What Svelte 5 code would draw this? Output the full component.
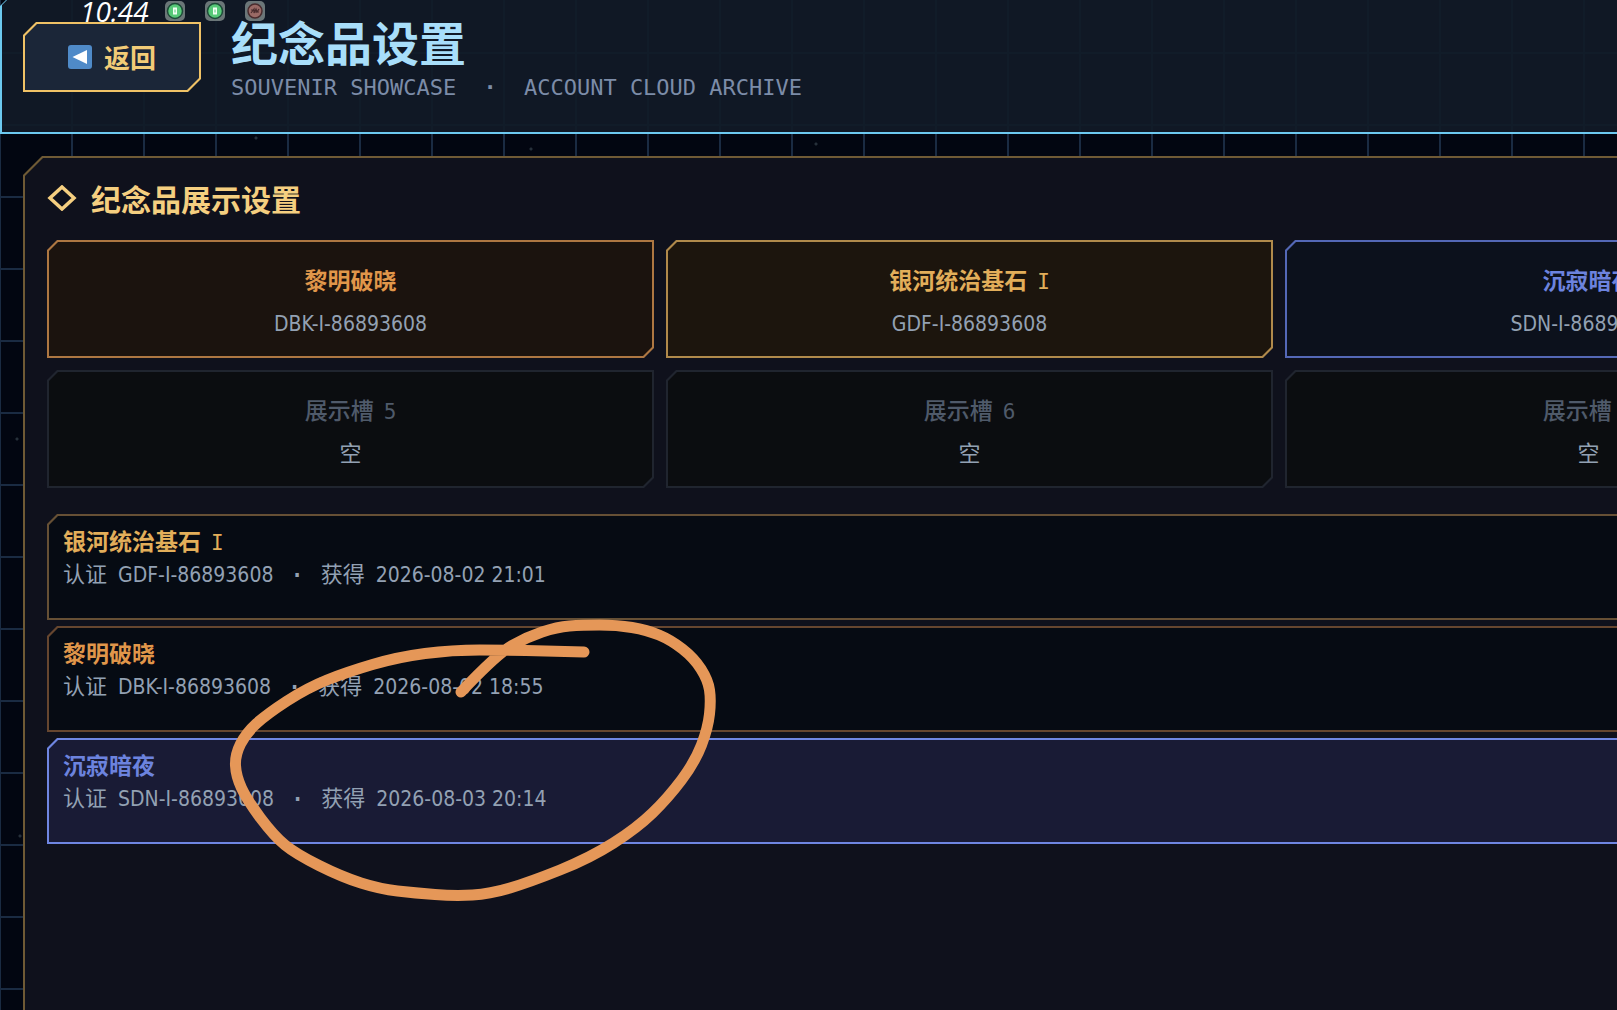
<script lang="ts">
  type Tone = 'dawn' | 'gold' | 'night' | 'empty';
  interface Slot { tone: Tone; name: string; rank?: string; code: string }
  interface Souvenir extends Slot { date: string }

  const slots: Slot[] = [
    { tone: 'dawn', name: '黎明破晓', code: 'DBK-I-86893608' },
    { tone: 'gold', name: '银河统治基石', rank: 'I', code: 'GDF-I-86893608' },
    { tone: 'night', name: '沉寂暗夜', code: 'SDN-I-86893608' },
    { tone: 'empty', name: '展示槽', rank: '5', code: '空' },
    { tone: 'empty', name: '展示槽', rank: '6', code: '空' },
    { tone: 'empty', name: '展示槽', rank: '7', code: '空' },
  ];

  const souvenirs: Souvenir[] = [
    { tone: 'gold', name: '银河统治基石', rank: 'I', code: 'GDF-I-86893608', date: '2026-08-02 21:01' },
    { tone: 'dawn', name: '黎明破晓', code: 'DBK-I-86893608', date: '2026-08-02 18:55' },
    { tone: 'night', name: '沉寂暗夜', code: 'SDN-I-86893608', date: '2026-08-03 20:14' },
  ];

  let selected = $state('SDN-I-86893608');

  // freehand stroke, smoothed through the midpoints
  const stroke = [
    [461, 692], [497, 654], [527, 637], [557, 627], [582, 625], [617, 625], [647, 630], [671, 640],
    [694, 658], [708, 680], [711, 700], [708, 728], [695, 762], [668, 798], [637, 828], [590, 858],
    [530, 882], [490, 894], [455, 896], [415, 893], [380, 889], [342, 877], [296, 854], [274, 836],
    [247, 800], [236, 776], [235, 755], [246, 733], [267, 714], [307, 688], [347, 672], [398, 657],
    [452, 650], [507, 650], [584, 652],
  ];

  function toPath(pts: number[][]) {
    let d = `M${pts[0]}`;
    for (let i = 1; i < pts.length - 1; i++) {
      const mx = (pts[i][0] + pts[i + 1][0]) / 2;
      const my = (pts[i][1] + pts[i + 1][1]) / 2;
      d += ` Q${pts[i]} ${mx},${my}`;
    }
    return `${d} L${pts[pts.length - 1]}`;
  }
</script>

{#snippet title(item: Slot)}
  <span class="name">{item.name}{#if item.rank}<span class="rank">{item.rank}</span>{/if}</span>
{/snippet}

<div class="page">
  <header class="cut topbar">
    <button class="cut back">
      <svg width="24" height="24" viewBox="0 0 24 24" aria-hidden="true">
        <rect width="24" height="24" rx="3" fill="#4f8ac8" />
        <path d="M4.500 12 19 5v14z" fill="#fff" />
      </svg>
      <span>返回</span>
    </button>
    <div class="heading">
      <h1>纪念品设置</h1>
      <p>SOUVENIR SHOWCASE <i>·</i> ACCOUNT CLOUD ARCHIVE</p>
    </div>
  </header>

  <div class="status">
    <span class="clock">10:44</span>
    {#each ['on', 'on', 'off'] as state}
      <svg width="20" height="20" viewBox="0 0 20 20" aria-hidden="true">
        <rect width="20" height="20" rx="5" fill="#6b7678" />
        {#if state === 'on'}
          <circle cx="10" cy="10" r="7.500" fill="#57c878" stroke="#1d4a38" stroke-width="1.500" />
          <rect x="8" y="6.500" width="4" height="7" fill="#f1fff4" />
          <path d="M10 8.500v3" stroke="#57c878" />
        {:else}
          <circle cx="10" cy="10" r="7" fill="#9a6a66" stroke="#4a2c2e" stroke-width="1.500" />
          <path d="M6 12l3-4v4l2-4 1 3 2-3M6 9h3M10 11h4" fill="none" stroke="#4a2c2e" stroke-width="1.200" />
        {/if}
      </svg>
    {/each}
  </div>

  <main class="cut panel">
    <h2>
      <svg width="30" height="26" viewBox="0 0 30 26" aria-hidden="true">
        <path d="M15 2 27 13 15 24 3 13z" fill="none" stroke="#f5cf80" stroke-width="3.500" />
      </svg>
      纪念品展示设置
    </h2>

    <section class="slots">
      {#each slots as slot}
        <button class="cut slot {slot.tone}">
          {@render title(slot)}
          <span class="detail"><span class:latin={slot.tone !== 'empty'}>{slot.code}</span></span>
        </button>
      {/each}
    </section>

    <section class="list">
      {#each souvenirs as item}
        <button
          class="cut row {item.tone}"
          class:selected={selected === item.code}
          onclick={() => (selected = item.code)}
        >
          {@render title(item)}
          <span class="detail">认证<span class="latin">{item.code}<i>·</i></span>获得<span class="latin">{item.date}</span></span>
        </button>
      {/each}
    </section>
  </main>

  <svg class="mark" aria-hidden="true">
    <path d={toPath(stroke)} />
  </svg>
</div>

<style>
  :global(body) {
    margin: 0;
    background: #020611;
  }

  .page {
    position: relative;
    display: flex;
    flex-direction: column;
    min-height: 100vh;
    overflow: hidden;
    font-family: "Noto Sans CJK SC", sans-serif;
    font-size: 22px;
    background:
      radial-gradient(circle at 256px 138px, #26303a 1px, transparent 2px),
      radial-gradient(circle at 531px 149px, #26303a 1px, transparent 2px),
      radial-gradient(circle at 816px 144px, #26303a 1px, transparent 2px),
      radial-gradient(circle at 17px 439px, #26303a 1px, transparent 2px),
      radial-gradient(circle at 20px 836px, #26303a 1px, transparent 2px),
      linear-gradient(90deg, #1a2b42 2px, transparent 2px) -1px 0 / 72px 72px,
      linear-gradient(#1a2b42 2px, transparent 2px) 0 52px / 72px 72px,
      #020611;
  }

  .latin {
    font-family: "DejaVu Sans Condensed", "DejaVu Sans", sans-serif;
    font-size: 21px;
    line-height: 21px;
  }
  .row .latin { margin-left: 11px; }
  .rank {
    margin-left: 10px;
    font-family: "DejaVu Sans Mono", monospace;
    font-size: 21px;
    font-weight: 400;
    line-height: 21px;
  }
  i {
    margin: 0 20px;
    font-style: normal;
    font-weight: 700;
  }

  /* framed box with cut corners: --a top left, --b bottom right */
  .cut {
    --a: 10px;
    --b: 0px;
    --line: #6f5a35;
    --fill: #0f111c;
    position: relative;
    z-index: 0;
    box-sizing: border-box;
    border: 0;
    background: var(--line);
    clip-path: polygon(var(--a) 0, 100% 0, 100% calc(100% - var(--b)), calc(100% - var(--b)) 100%, 0 100%, 0 var(--a));
  }
  .cut::before {
    content: "";
    position: absolute;
    z-index: -1;
    inset: 2px;
    background: var(--fill);
    clip-path: polygon(calc(var(--a) - 1px) 0, 100% 0, 100% calc(100% - var(--b) + 1px), calc(100% - var(--b) + 1px) 100%, 0 100%, 0 calc(var(--a) - 1px));
  }

  button {
    font: inherit;
    cursor: pointer;
  }

  .topbar {
    --a: 6px;
    --line: #6cc9f0;
    --fill:
      linear-gradient(90deg, #111c29 2px, transparent 2px) -3px 0 / 72px 72px,
      linear-gradient(#111c29 2px, transparent 2px) 0 52px / 72px 72px,
      #101825;
    display: flex;
    gap: 30px;
    height: 134px;
    padding: 22px 23px 0;
  }
  .topbar::before {
    top: 0;
    right: 0;
  }

  .back {
    --a: 13px;
    --b: 13px;
    --line: #f0c266;
    --fill: #1b2638;
    display: flex;
    align-items: center;
    justify-content: center;
    gap: 12px;
    width: 178px;
    height: 70px;
    padding: 0;
    color: #f2cb77;
    font-size: 26px;
    line-height: 26px;
    font-weight: 700;
  }

  h1, h2, p { margin: 0; }
  h1 {
    color: #a8defa;
    font-size: 47px;
    line-height: 38px;
  }
  .heading p {
    color: #7c8ca8;
    font-family: "DejaVu Sans Mono", monospace;
    line-height: 56px;
  }
  .heading i { margin: 0 14px; }

  .status {
    position: absolute;
    top: 0;
    left: 80px;
    display: flex;
    gap: 20px;
    z-index: 1;
  }
  .status svg { margin-top: 1px; }
  .clock {
    width: 65px;
    color: #fff;
    font: italic 400 28px/22px "Open Sans", sans-serif;
  }

  .panel {
    --a: 19px;
    flex: 1;
    min-width: 100%;
    width: max-content;
    margin: 22px 0 0 23px;
    padding: 24px;
  }
  .panel::before { bottom: 0; }

  h2 {
    display: flex;
    align-items: center;
    gap: 14px;
    margin-bottom: 24px;
    color: #f5cf80;
    font-size: 30px;
    line-height: 36px;
  }

  .slots {
    display: grid;
    grid-template-columns: repeat(3, minmax(607px, 1fr));
    gap: 12px;
    margin-bottom: 26px;
  }
  .slot {
    --b: 10px;
    display: flex;
    flex-direction: column;
    align-items: center;
    padding: 18px 0 16px;
    line-height: 42px;
  }
  .name {
    color: var(--ink);
    font-size: 23px;
    font-weight: 700;
  }
  .detail { color: #93a1b3; }

  .list {
    display: grid;
    gap: 6px;
  }
  .row {
    display: flex;
    flex-direction: column;
    padding: 10px 16px 32px;
    line-height: 32px;
    text-align: left;
  }

  .dawn { --ink: #e0964a; --line: #ad7742; --fill: #1b130e; }
  .gold { --ink: #e2ae5a; --line: #b08a4b; --fill: #1c150d; }
  .night { --ink: #6c83de; --line: #5468b6; --fill: #0c111c; }
  .empty { --ink: #4f5a6a; --line: #20252f; --fill: #0b0d10; }
  .empty .name { font-weight: 500; }

  .row.dawn { --line: #66462f; --fill: #060b13; }
  .row.gold { --line: #665035; --fill: #060b13; }
  .row.night { --line: #3a467a; --fill: #060b13; }
  .row.selected { --line: #6f86e2; --fill: #191b35; }

  .mark {
    position: absolute;
    top: 0;
    left: 0;
    z-index: 2;
    width: 100%;
    height: 100%;
    pointer-events: none;
  }
  .mark path {
    fill: none;
    stroke: #e59758;
    stroke-width: 11;
    stroke-linecap: round;
    stroke-linejoin: round;
  }
</style>
